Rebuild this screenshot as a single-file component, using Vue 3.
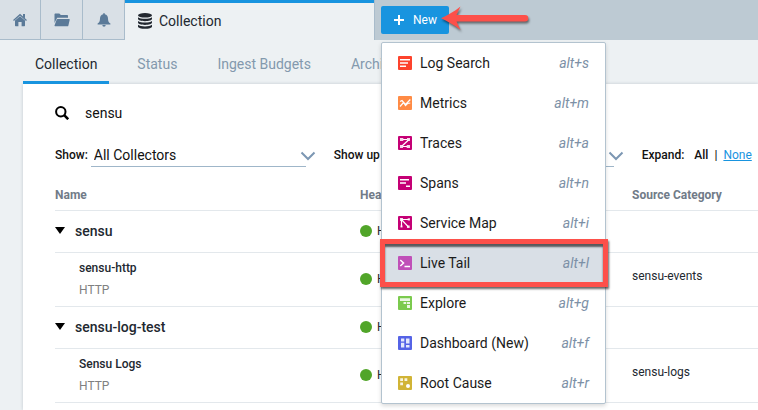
<script setup>
import { ref } from 'vue'

const search = ref('sensu')
const active = ref('Live Tail')

const navTabs = ['Collection', 'Status', 'Ingest Budgets', 'Archive']

const menu = [
  { name: 'Log Search', key: 'alt+s', icon: 'log' },
  { name: 'Metrics', key: 'alt+m', icon: 'metrics' },
  { name: 'Traces', key: 'alt+a', icon: 'traces' },
  { name: 'Spans', key: 'alt+n', icon: 'spans' },
  { name: 'Service Map', key: 'alt+i', icon: 'map' },
  { name: 'Live Tail', key: 'alt+l', icon: 'tail' },
  { name: 'Explore', key: 'alt+g', icon: 'explore' },
  { name: 'Dashboard (New)', key: 'alt+f', icon: 'dashboard' },
  { name: 'Root Cause', key: 'alt+r', icon: 'root' }
]

const rows = [
  { group: true, name: 'sensu' },
  { name: 'sensu-http', type: 'HTTP', category: 'sensu-events' },
  { group: true, name: 'sensu-log-test' },
  { name: 'Sensu Logs', type: 'HTTP', category: 'sensu-logs' }
]
</script>

<template>
  <div class="app">
    <header class="topbar">
      <nav class="shortcuts">
        <button class="shortcut" aria-label="Home">
          <svg width="14" height="14" viewBox="0 0 14 14"><path fill="currentColor" d="M7 3.200 12 7.500v5.100c0 .4-.2.600-.6.600H8.600V9H5.400v4.200H2.600c-.4 0-.6-.2-.6-.6V7.500z" /><path fill="none" stroke="currentColor" stroke-width="1.300" d="M.5 7.500 7 1.700l6.500 5.800" /><path fill="currentColor" d="M10 1h2v4.500l-2-1.800z" /></svg>
        </button>
        <button class="shortcut" aria-label="Library">
          <svg width="16" height="14" viewBox="0 0 16 14"><path fill="currentColor" d="M.5 1.500C.5.900.9.500 1.500.5h3.600c.4 0 .7.200.9.500L6.700 2h6.300c.6 0 1 .4 1 1v1.800H3.200L.5 10z" /><path fill="currentColor" d="M3.500 6h11.700c.4 0 .6.300.5.700l-1.300 5.700c-.1.600-.5.900-1.100.900H1.100c-.4 0-.7-.3-.6-.7L2.700 6.500c.1-.3.400-.5.800-.5z" /></svg>
        </button>
        <button class="shortcut" aria-label="Alerts">
          <svg width="14" height="14" viewBox="0 0 14 14"><path fill="currentColor" d="M6.200.3h1.600v1C9.900 1.700 11 3.300 11 5.400c0 2.800.8 4 2.400 5v1.100H.6v-1.100c1.600-1 2.400-2.200 2.400-5 0-2.100 1.100-3.700 3.200-4.100zM5.300 12h3.400a1.700 1.700 0 0 1-3.400 0z" /></svg>
        </button>
      </nav>
      <button class="page-tab">
        <svg width="14" height="16" viewBox="0 0 14 16"><g fill="currentColor"><ellipse cx="7" cy="2.300" rx="7" ry="2.300" /><path d="M0 4.200c1.300 1.200 4 1.600 7 1.600s5.700-.4 7-1.600v1.600c0 1.400-3.100 2.400-7 2.400S0 7.200 0 5.800zM0 8c1.300 1.200 4 1.600 7 1.600s5.700-.4 7-1.600v1.600C14 11 10.900 12 7 12S0 11 0 9.600zM0 11.800c1.300 1.200 4 1.600 7 1.600s5.700-.4 7-1.600v1.600c0 1.400-3.100 2.400-7 2.400s-7-1-7-2.400z" /></g></svg>
        <span>Collection</span>
      </button>
      <div class="actions">
        <div class="new-wrap">
          <button class="new-btn">
            <svg width="12" height="12" viewBox="0 0 12 12"><path stroke="#fff" stroke-width="2" d="M6 1v10M1 6h10" /></svg>
            <span>New</span>
          </button>
          <svg class="arrow" width="96" height="30" viewBox="0 0 96 30"><path fill="#fd504a" d="M2 14.200C8 11.500 15 8 21.500 2.600L17.500 11H86a3.200 3.200 0 0 1 0 6.500H17.500L21.500 26C15 20.500 8 17 2 14.200z" /></svg>
          <ul class="menu">
            <li v-for="m in menu" :key="m.name">
              <button class="item" :class="{ active: m.name === active }" @click="active = m.name">
                <svg class="item-icon" :class="m.icon" width="14" height="14" viewBox="0 0 14 14">
                  <path v-if="m.icon === 'log'" class="line" d="M2 3.700h10M2 7h8M2 10.300h6" />
                  <path v-else-if="m.icon === 'metrics'" class="thin" d="M2 5.500 4 4.500 7.500 8.500 12.300 3.500M2 10.500 5.500 6.500 7.500 9.500 9.500 7.500 12.300 7" />
                  <g v-else-if="m.icon === 'traces'"><path class="block" d="M2 2h3.300v3H2zM9 2h3v3H9zM2 9h3v3H2zM8.700 9H12v3H8.700z" /><path class="thin" d="M5 3.500h4M10.500 4 4 10M5 10.500h4" /></g>
                  <path v-else-if="m.icon === 'spans'" class="line" d="M2 3.700h9M2 7h6M8 10.300h4" />
                  <g v-else-if="m.icon === 'map'"><path class="thin" d="M3.500 11V3.500L10.500 11M4 3.500h7" /><path class="block" d="M2 2h3v3H2zM2.500 9.500h2v2h-2zM9.700 2.300H12v2.300H9.700zM9 9.500h2.700V12H9z" /></g>
                  <path v-else-if="m.icon === 'tail'" class="line" d="M2.300 4 5.500 7l-3.200 3M6.500 10.500H12" />
                  <path v-else-if="m.icon === 'explore'" class="block" d="M2 2.300h10V5H2zM5.500 6h2.700v2H5.500zM9 6h3v2H9zM9 9h3v3H9z" />
                  <path v-else-if="m.icon === 'dashboard'" class="block" d="M3 2.500h3.300V5.500H3zM8 2.500h3.500v5H8zM3 6.800h3.300v4.700H3zM8 9h3.500v2.500H8z" />
                  <g v-else><path class="block" d="M2.200 2.200H5V5H2.200zM6.500 2.200h2.800V5H6.500zM2.200 6.500H5v2.800H2.200z" /><circle cx="10" cy="10" r="2" fill="#fff" /></g>
                </svg>
                <span class="item-name">{{ m.name }}</span>
                <kbd>{{ m.key }}</kbd>
              </button>
            </li>
          </ul>
          <div class="highlight"></div>
        </div>
      </div>
    </header>

    <nav class="nav">
      <a v-for="(t, i) in navTabs" :key="t" href="#" :class="{ current: i === 0 }">{{ t }}</a>
    </nav>

    <main class="panel">
      <label class="search">
        <svg width="14" height="14" viewBox="0 0 14 14" aria-label="Search"><circle cx="5.800" cy="5.800" r="4.700" fill="none" stroke="#000" stroke-width="2" /><path stroke="#000" stroke-width="2.600" d="m9.200 9.200 4 4" /></svg>
        <input v-model="search" type="text" />
      </label>

      <div class="filters">
        <label for="show">Show:</label>
        <div class="select">
          <select id="show"><option>All Collectors</option></select>
          <svg width="16" height="10" viewBox="0 0 16 10"><path d="m1.500 1.500 6.500 6.500 6.500-6.500" /></svg>
        </div>
        <label for="limit" class="limit">Show up to:</label>
        <div class="select short">
          <select id="limit"><option>10</option></select>
          <svg width="16" height="10" viewBox="0 0 16 10"><path d="m1.500 1.500 6.500 6.500 6.500-6.500" /></svg>
        </div>
        <span class="expand">Expand:</span>
        <b>All</b>
        <span class="bar">|</span>
        <a href="#">None</a>
      </div>

      <table>
        <thead>
          <tr><th class="c-name">Name</th><th class="c-health">Health</th><th>Source Category</th></tr>
        </thead>
        <tbody>
          <tr v-for="r in rows" :key="r.name" :class="r.group ? 'group' : 'source'">
            <td v-if="r.group"><button class="toggle"><svg width="10" height="7" viewBox="0 0 10 7"><path d="M0 0h10L5 7z" /></svg>{{ r.name }}</button></td>
            <td v-else><div class="src"><b>{{ r.name }}</b><span>{{ r.type }}</span></div></td>
            <td><div class="health"><i></i>Healthy</div></td>
            <td class="category">{{ r.category }}</td>
          </tr>
        </tbody>
      </table>
    </main>
  </div>
</template>

<style>
body {
  background: #edf1f3;
  overflow: hidden;
}
</style>

<style scoped>
.app {
  font-family: Roboto, "Liberation Sans", sans-serif;
  font-size: 14px;
  color: #222830;
}
.app * { box-sizing: border-box; }
button, input, select {
  font: inherit;
  color: inherit;
  background: none;
  border: 0;
  padding: 0;
  margin: 0;
  outline: 0;
}
a { text-decoration: none; }
svg { display: block; flex: none; }

.topbar { display: flex; height: 40px; }
.shortcuts { display: flex; }
.shortcut {
  width: 42px;
  display: flex;
  align-items: center;
  justify-content: center;
  background: #d9e0e6;
  color: #5b7a98;
  border-right: 1px solid #a9bccb;
  border-bottom: 1px solid #a9bccb;
}
.shortcut:first-child { width: 41px; }
.page-tab {
  width: 249px;
  display: flex;
  align-items: center;
  gap: 7px;
  padding-left: 13px;
  padding-bottom: 2px;
  border-top: 3px solid #1894df;
}
.actions {
  flex: 1;
  padding: 6px;
  background: #bdcad3;
  border-left: 1px solid #a9bccb;
}
.new-wrap { position: relative; width: 68px; }
.new-btn {
  width: 68px;
  height: 28px;
  display: flex;
  align-items: center;
  gap: 8px;
  padding-left: 12px;
  border-radius: 2px;
  background: #1894df;
  color: #fff;
  font-size: 12px;
}
.arrow {
  position: absolute;
  left: 58px;
  top: -2px;
  z-index: 3;
  filter: drop-shadow(1px 2px 1px rgba(0, 0, 0, 0.5));
}
.menu {
  position: absolute;
  left: 0;
  top: 36px;
  z-index: 2;
  width: 225px;
  margin: 0;
  padding: 0;
  list-style: none;
  background: #fff;
  border: 1px solid #b3c3cf;
  border-radius: 2px;
  box-shadow: 0 2px 4px rgba(0, 0, 0, 0.15);
}
.item {
  width: 100%;
  height: 40px;
  display: flex;
  align-items: center;
  gap: 8px;
  padding: 0 16px;
  text-align: left;
  color: #1b1b1b;
}
.item.active { background: #d9dfe6; }
.item-name { flex: 1; }
kbd { font-family: inherit; font-style: italic; color: #7c90a6; }
.item-icon { border-radius: 1px; }
.line { fill: none; stroke: #fff; stroke-width: 1.500; }
.thin { fill: none; stroke: #fff; stroke-width: 1.200; }
.block { fill: #fff; opacity: 0.85; }
.log { background: #fd432d; }
.metrics { background: #ff8b45; }
.traces, .spans, .map { background: #c50075; }
.tail { background: #c050b8; }
.explore { background: #7bca4e; }
.dashboard { background: #5563e6; }
.root { background: #d1b436; }
.highlight {
  position: absolute;
  left: -1px;
  top: 233px;
  z-index: 3;
  width: 228px;
  height: 48px;
  border: 5px solid #fd504a;
  box-shadow: 1px 2px 2px rgba(0, 0, 0, 0.6), inset 0 3px 2px rgba(0, 0, 0, 0.6);
  pointer-events: none;
}

.nav {
  display: flex;
  gap: 16px;
  padding-left: 23px;
  height: 44px;
}
.nav a {
  padding: 0 12px;
  line-height: 48px;
  height: 44px;
  color: #8399ad;
  border-bottom: 3px solid transparent;
}
.nav .current { color: #222830; border-color: #1894df; }

.panel {
  margin-left: 23px;
  padding-left: 32px;
  min-height: calc(100vh - 84px);
  background: #fff;
  box-shadow: 0 0 3px rgba(90, 110, 130, 0.3);
}
.search {
  display: flex;
  align-items: center;
  gap: 16px;
  padding-top: 18px;
}
.search input { flex: 1; height: 22px; color: #111; }
.filters {
  display: flex;
  align-items: center;
  height: 24px;
  margin-top: 19px;
  font-size: 12px;
  font-weight: 500;
  color: #111;
}
.select {
  position: relative;
  width: 215px;
  margin-left: 3px;
  border-bottom: 1px solid #9fb6c9;
}
.select select {
  appearance: none;
  width: 100%;
  height: 23px;
  padding-left: 3px;
  font-size: 14px;
  font-weight: 400;
}
.select svg { position: absolute; right: -10px; top: 8px; pointer-events: none; }
.select path { fill: none; stroke: #7c97b3; stroke-width: 2; }
.limit { margin-left: 28px; }
.select.short { flex: 0 1 214px; }
.expand { margin-left: 28px; margin-right: 10px; }
.bar { margin: 0 6px; }
.filters a { color: #1894df; font-weight: 400; text-decoration: underline; }

table {
  width: 100%;
  table-layout: fixed;
  border-collapse: separate;
  border-spacing: 0;
  margin-top: 13px;
  font-size: 12px;
}
th, td { padding: 0; text-align: left; border-bottom: 1px solid #e3e8ec; }
th { height: 31px; color: #717b88; font-weight: 700; }
.c-name { width: 305px; }
.c-health { width: 272px; }
.group td { height: 42px; padding-bottom: 2px; }
.source td { height: 54px; padding-bottom: 1px; }
.source .category { padding-bottom: 7px; }
.toggle {
  display: flex;
  align-items: center;
  gap: 10px;
  font-size: 14px;
  font-weight: 500;
}
.src {
  display: flex;
  flex-direction: column;
  gap: 8px;
  padding-left: 24px;
}
b { font-weight: 500; }
.src span { color: #808080; }
.health { display: flex; align-items: center; gap: 5px; }
.health i { width: 12px; height: 12px; border-radius: 50%; background: #51a529; }
</style>
